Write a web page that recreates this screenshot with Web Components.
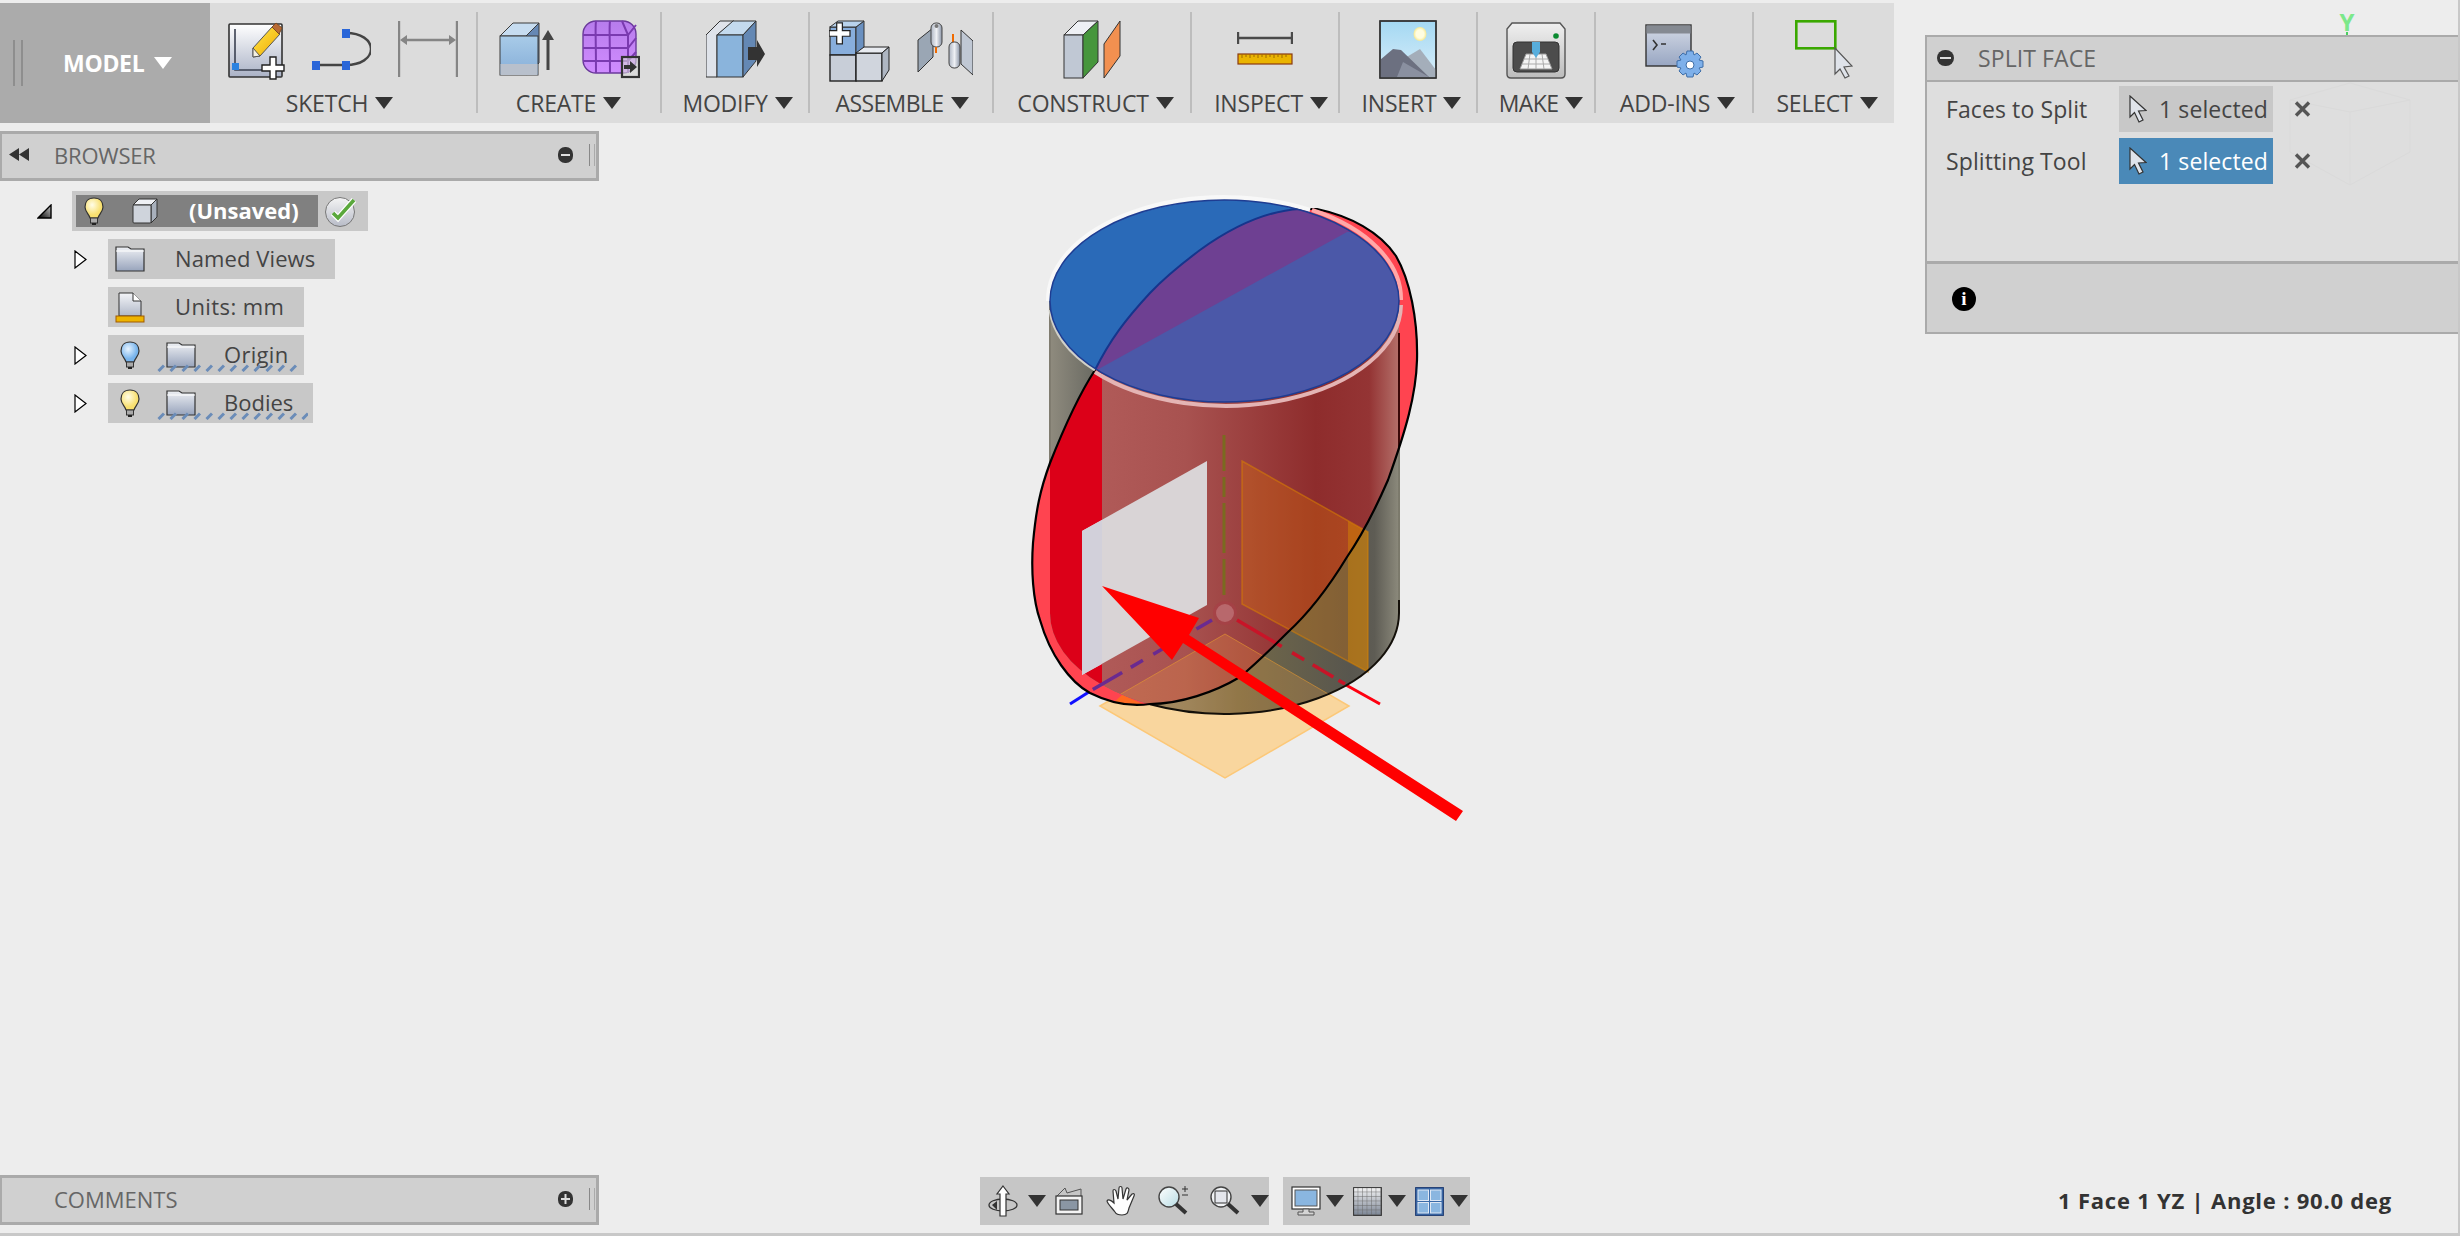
<!DOCTYPE html>
<html>
<head>
<meta charset="utf-8">
<title>Split Face</title>
<style>
    html, body { margin: 0; height: 100%; overflow: hidden; background: #ededed; }
    fx-app > side-panel { margin-top: 8px; }
</style>
</head>
<body>
<fx-app>
    <tool-bar>
        <tool-group label="SKETCH" width="268" shift="-7">
            <fx-icon name="sketch"></fx-icon><fx-icon name="curve"></fx-icon><fx-icon name="dimension"></fx-icon>
        </tool-group>
        <tool-group label="CREATE" width="184" shift="-1">
            <fx-icon name="extrude"></fx-icon><fx-icon name="form"></fx-icon>
        </tool-group>
        <tool-group label="MODIFY" width="148" shift="5">
            <fx-icon name="modify"></fx-icon>
        </tool-group>
        <tool-group label="ASSEMBLE" width="184" shift="2" style="--ls:-.6px">
            <fx-icon name="assemble"></fx-icon><fx-icon name="joint"></fx-icon>
        </tool-group>
        <tool-group label="CONSTRUCT" width="198" shift="7">
            <fx-icon name="construct"></fx-icon>
        </tool-group>
        <tool-group label="INSPECT" width="148" shift="12">
            <fx-icon name="inspect"></fx-icon>
        </tool-group>
        <tool-group label="INSERT" width="138" shift="7">
            <fx-icon name="insert"></fx-icon>
        </tool-group>
        <tool-group label="MAKE" width="118" shift="10" style="--ls:-.6px">
            <fx-icon name="make"></fx-icon>
        </tool-group>
        <tool-group label="ADD-INS" width="158" shift="7">
            <fx-icon name="addins"></fx-icon>
        </tool-group>
        <tool-group label="SELECT" width="140" shift="6">
            <fx-icon name="select"></fx-icon>
        </tool-group>
    </tool-bar>

    <side-panel title="BROWSER" back toggle="minus" style="--ls:-.2px"></side-panel>

    <model-tree>
        <tree-row twisty="open" kind="root">
            <fx-icon name="bulb" style="margin-left:8px"></fx-icon>
            <fx-icon name="box" style="margin-left:28px"></fx-icon>
            <span style="margin-left:31px">(Unsaved)</span>
            <fx-icon name="check" slot="after"></fx-icon>
        </tree-row>
        <tree-row twisty="closed" pad="7" end="20">
            <fx-icon name="folder"></fx-icon>
            <span style="margin-left:30px;letter-spacing:.1px">Named Views</span>
        </tree-row>
        <tree-row pad="7" end="20">
            <fx-icon name="units"></fx-icon>
            <span style="margin-left:30px;letter-spacing:.4px">Units: mm</span>
        </tree-row>
        <tree-row twisty="closed" pad="12" end="16" wavy="140">
            <fx-icon name="bulbblue"></fx-icon>
            <fx-icon name="folder" style="margin-left:26px"></fx-icon>
            <span style="margin-left:28px;letter-spacing:.3px">Origin</span>
        </tree-row>
        <tree-row twisty="closed" pad="12" end="20" wavy="151">
            <fx-icon name="bulb"></fx-icon>
            <fx-icon name="folder" style="margin-left:26px"></fx-icon>
            <span style="margin-left:28px">Bodies</span>
        </tree-row>
    </model-tree>

    <split-dialog title="SPLIT FACE">
        <select-row label="Faces to Split"></select-row>
        <select-row label="Splitting Tool" active></select-row>
    </split-dialog>

    <bottom-bar>
        <side-panel title="COMMENTS" toggle="plus"></side-panel>
        <nav-group style="margin-left:381px;width:289px">
            <fx-icon name="orbit" style="margin-left:8px"></fx-icon>
            <drop-arrow style="margin-left:10px"></drop-arrow>
            <fx-icon name="lookat" style="margin-left:9px"></fx-icon>
            <fx-icon name="hand" style="margin-left:23px"></fx-icon>
            <fx-icon name="zoom" style="margin-left:22px"></fx-icon>
            <fx-icon name="fit" style="margin-left:22px"></fx-icon>
            <drop-arrow style="margin-left:11px"></drop-arrow>
        </nav-group>
        <nav-group style="margin-left:14px;width:187px">
            <fx-icon name="monitor" style="margin-left:8px"></fx-icon>
            <drop-arrow style="margin-left:5px"></drop-arrow>
            <fx-icon name="grid" style="margin-left:9px"></fx-icon>
            <drop-arrow style="margin-left:6px"></drop-arrow>
            <fx-icon name="views" style="margin-left:9px"></fx-icon>
            <drop-arrow style="margin-left:6px"></drop-arrow>
        </nav-group>
        <status-text>1 Face 1 YZ | Angle : 90.0 deg</status-text>
    </bottom-bar>
</fx-app>

<script>
(function() {
    const ICONS = {
        // toolbar icons, all 60 tall, y = 0 is page y 20
        sketch: `<svg width="56" height="60" style="overflow:visible"><defs><linearGradient id="p" x1="0" y1="0" x2="0" y2="1"><stop offset="0" stop-color="#fff"/><stop offset="1" stop-color="#aab2c6"/></linearGradient><linearGradient id="y" x1="0" y1="0" x2="1" y2="1"><stop offset="0" stop-color="#ffe84a"/><stop offset="1" stop-color="#f0a800"/></linearGradient></defs>
            <rect x="1" y="4" width="53" height="53" rx="1" fill="url(#p)" stroke="#333" stroke-width="1.6"/>
            <path d="M7 9V50H36" fill="none" stroke="#3a4050" stroke-width="1.6"/>
            <rect x="4" y="43" width="7" height="7" fill="#2a82e0"/>
            <polygon points="25,28 44,7 52,14 32,36 25,37" fill="url(#y)" stroke="#555"/>
            <polygon points="25,28 32,36 25,37" fill="#f4f0e0" stroke="#555"/>
            <polygon points="44,7 48,3 54,8 51,14" fill="#b86a34" stroke="#7a4a24"/>
            <path d="M42 37h6v8h8v6h-8v8h-6v-8h-8v-6h8z" fill="#fff" stroke="#222" stroke-width="1.4"/></svg>`,
        curve: `<svg width="60" height="60"><path d="M5 45H35C50 45 60 38 60 29C60 20 50 13 35 13" fill="none" stroke="#444" stroke-width="2.4"/>
            <g fill="#2a66d8"><rect x="31" y="9" width="8" height="9"/><rect x="31" y="41" width="8" height="9"/><rect x="1" y="41" width="8" height="9"/></g></svg>`,
        dimension: `<svg width="60" height="60"><g stroke="#858585" stroke-width="2.4" fill="#858585"><path d="M1 1V57M59 1V57M6 20H54" fill="none"/></g><path d="M2 20L9 15V25ZM58 20L51 15V25Z" fill="#858585"/></svg>`,
        extrude: `<svg width="56" height="60"><defs><linearGradient id="f" x1="0" y1="0" x2="0" y2="1"><stop offset="0" stop-color="#a8cbe8"/><stop offset="1" stop-color="#86aed8"/></linearGradient></defs>
            <polygon points="1,16 14,3 40,3 27,16" fill="#c6dcf0" stroke="#3a3a3a"/>
            <polygon points="27,16 40,3 40,43 27,55" fill="#6688b4" stroke="#3a3a3a"/>
            <rect x="1" y="16" width="38" height="39" fill="url(#f)" stroke="#3a3a3a"/>
            <rect x="1.5" y="44" width="37" height="11" fill="#b8c0cc"/>
            <path d="M49 50V14" stroke="#444" stroke-width="3"/><path d="M49 10L55 20H43Z" fill="#444"/></svg>`,
        form: `<svg width="58" height="60"><defs><linearGradient id="g" x1="0" y1="0" x2="0" y2="1"><stop offset="0" stop-color="#b77cec"/><stop offset="1" stop-color="#d08cff"/></linearGradient></defs>
            <rect x="1" y="1" width="53" height="52" rx="13" fill="url(#g)" stroke="#6a3a9a" stroke-width="1.4"/>
            <path d="M1 15H46L54 5M1 28H46L54 18M1 41H46L54 32M14 1C13 8 14 15 14 53M28 1C27 8 28 15 28 53M40 1L46 15V53" fill="none" stroke="#7a3ab0" stroke-width="2"/>
            <rect x="40" y="37" width="17" height="20" fill="#d8d8d8" fill-opacity=".6" stroke="#333" stroke-width="2.2"/><path d="M42 45h6v-4l7 6-7 6v-4h-6z" fill="#333"/></svg>`,
        modify: `<svg width="59" height="60"><polygon points="0,15 14,1 28,1 11,15 11,57 0,57" fill="#dfe3ea" stroke="#333"/><polygon points="11,15 27,1 50,1 37,15" fill="#c4daee" stroke="#333"/><rect x="11" y="15" width="26" height="42" fill="#8ab4dc" stroke="#333"/><polygon points="37,15 50,1 50,41 37,57" fill="#6488b4" stroke="#333"/><path d="M42 28h9v-7l8 14-8 13v-7h-9z" fill="#333" transform="translate(0,-1)"/></svg>`,
        assemble: `<svg width="61" height="62"><rect x="1" y="7" width="26" height="28" fill="#88aedc" stroke="#333" stroke-width="1.3"/><polygon points="27,7 35,1 35,28 27,35" fill="#6a90c0" stroke="#333"/><polygon points="1,7 9,1 35,1 27,7" fill="#b8d2ec" stroke="#333"/>
            <rect x="1" y="35" width="26" height="26" fill="#c8ced8" stroke="#222" stroke-width="1.4"/><rect x="27" y="33" width="26" height="28" fill="#d0d5dd" stroke="#222" stroke-width="1.4"/><polygon points="27,33 35,27 60,27 53,33" fill="#e8ebf0" stroke="#222"/><polygon points="53,33 60,27 60,50 53,61" fill="#aeb6c2" stroke="#222"/>
            <path d="M6 1h6v8h8v6h-8v8h-6v-8h-8v-6h8z" fill="#fff" stroke="#222" stroke-width="1.3" transform="translate(2,2) scale(.95)"/></svg>`,
        joint: `<svg width="56" height="60"><defs><linearGradient id="c" x1="0" y1="0" x2="1" y2="0"><stop offset="0" stop-color="#aeb6c4"/><stop offset=".5" stop-color="#eef0f4"/><stop offset="1" stop-color="#8a94a6"/></linearGradient></defs>
            <polygon points="1,20 16,8 16,37 1,52" fill="#9aa6b4" stroke="#333"/><rect x="14" y="3" width="11" height="24" rx="5" fill="url(#c)" stroke="#444"/><circle cx="19.500" cy="6" r="2" fill="#777"/>
            <path d="M19 27V33" stroke="#f06a00" stroke-width="2"/><path d="M36 14V24" stroke="#f06a00" stroke-width="2"/>
            <polygon points="44,10 56,21 56,55 44,44" fill="#c0c8d4" stroke="#333"/><rect x="32" y="22" width="11" height="26" rx="5" fill="url(#c)" stroke="#444"/></svg>`,
        construct: `<svg width="58" height="60"><polygon points="1,15 15,1 35,1 20,15" fill="#eef0f4" stroke="#333"/><rect x="1" y="15" width="19" height="43" fill="#c0c8d4" stroke="#333"/><polygon points="20,15 35,1 35,42 20,58" fill="#46963c" stroke="#333"/><polygon points="41,24 57,1 57,36 41,58" fill="#f29050" stroke="#333"/></svg>`,
        inspect: `<svg width="56" height="60"><path d="M1 12V24M55 12V24M1 18H55" fill="none" stroke="#4a4a4a" stroke-width="2.400"/><rect x="1" y="34" width="54" height="10" fill="#eab400" stroke="#8a3a10" stroke-width="1.200"/><path d="M5 34v4M9 34v3M13 34v4M17 34v3M21 34v4M25 34v3M29 34v4M33 34v3M37 34v4M41 34v3M45 34v4M49 34v3" stroke="#a06a00"/></svg>`,
        insert: `<svg width="58" height="60"><defs><linearGradient id="s" x1="0" y1="0" x2="0" y2="1"><stop offset="0" stop-color="#a4d8f2"/><stop offset="1" stop-color="#d8eefa"/></linearGradient><radialGradient id="u"><stop offset=".6" stop-color="#fffde0"/><stop offset="1" stop-color="#f6e890"/></radialGradient></defs>
            <rect x="1" y="1" width="56" height="57" fill="url(#s)" stroke="#333" stroke-width="1.400"/><ellipse cx="41" cy="14" rx="6.500" ry="7" fill="url(#u)"/>
            <polygon points="26,38 41,29 57,50 57,57 40,57" fill="#a4aeba"/><polygon points="1,40 14,29 22,30 50,57 1,57" fill="#6c7080"/><polygon points="18,57 24,42 50,57" fill="#8a90a0"/><rect x="1" y="1" width="56" height="57" fill="none" stroke="#333" stroke-width="1.400"/></svg>`,
        make: `<svg width="60" height="60"><defs><linearGradient id="m" x1="0" y1="0" x2="0" y2="1"><stop offset="0" stop-color="#f0f0f0"/><stop offset="1" stop-color="#bcbcbc"/></linearGradient></defs>
            <path d="M6 3H54L59 9V54Q59 58 55 58H5Q1 58 1 54V9Z" fill="url(#m)" stroke="#555" stroke-width="1.400"/><rect x="7" y="22" width="46" height="30" rx="4" fill="#4c4c4c" stroke="#333"/>
            <polygon points="14,49 46,49 40,34 20,34" fill="#f4f4f4" stroke="#999"/><path d="M18 39H42M16 44H44M24 34L22 49M30 34V49M36 34L38 49" stroke="#aaa"/>
            <polygon points="26,22 34,22 34,32 30,38 26,32" fill="#58aedc"/><circle cx="50" cy="16" r="2.800" fill="#0a8a30"/></svg>`,
        addins: `<svg width="58" height="60" style="overflow:visible"><defs><linearGradient id="a" x1="0" y1="0" x2="0" y2="1"><stop offset="0" stop-color="#d4dae6"/><stop offset="1" stop-color="#98a6c2"/></linearGradient></defs>
            <rect x="1" y="5" width="45" height="41" fill="url(#a)" stroke="#333" stroke-width="1.400"/><rect x="1.500" y="5.500" width="44" height="8" fill="#858a92"/>
            <path d="M8 20L12 25L8 30M16 24H21" fill="none" stroke="#333" stroke-width="1.600"/>
            <g transform="translate(45,45)" fill="#7eb0ea" stroke="#3e6ea8"><path d="M-3-14h6l1 4 3-2 4 4-2 3 4 1v6l-4 1 2 3-4 4-3-2-1 4h-6l-1-4-3 2-4-4 2-3-4-1v-6l4-1-2-3 4-4 3 2z"/><circle r="4" fill="#fff"/></g></svg>`,
        select: `<svg width="58" height="60"><rect x="1.300" y="1.300" width="39" height="27" fill="none" stroke="#3aa800" stroke-width="2.600"/><path d="M40 28V54L45 49L50 58L54 56L49 47L57 46Z" fill="#dfe3ea" stroke="#555" stroke-width="1.200"/></svg>`,
        // tree icons
        bulb: `<svg width="20" height="29"><defs><radialGradient id="b" cx=".4" cy=".35"><stop offset="0" stop-color="#fffde8"/><stop offset="1" stop-color="#f8e070"/></radialGradient></defs><path d="M10 1C4 1 1 5 1 10C1 15 5 17 6 21H14C15 17 19 15 19 10C19 5 16 1 10 1Z" fill="url(#b)" stroke="#333" stroke-width="1.200"/><rect x="6.500" y="21" width="7" height="5" fill="#aaa" stroke="#333"/><rect x="8" y="26" width="4" height="2" fill="#222"/></svg>`,
        bulbblue: `<svg width="20" height="29"><defs><radialGradient id="b" cx=".4" cy=".35"><stop offset="0" stop-color="#e8f4ff"/><stop offset="1" stop-color="#78b4ec"/></radialGradient></defs><path d="M10 1C4 1 1 5 1 10C1 15 5 17 6 21H14C15 17 19 15 19 10C19 5 16 1 10 1Z" fill="url(#b)" stroke="#333" stroke-width="1.200"/><rect x="6.500" y="21" width="7" height="5" fill="#aaa" stroke="#333"/><rect x="8" y="26" width="4" height="2" fill="#222"/></svg>`,
        box: `<svg width="26" height="26"><polygon points="1,7 7,1 25,1 19,7" fill="#eef0f4" stroke="#333"/><polygon points="19,7 25,1 25,19 19,25" fill="#a8b0bc" stroke="#333"/><rect x="1" y="7" width="18" height="18" rx="1" fill="#cfd4dc" stroke="#333"/></svg>`,
        check: `<svg width="32" height="31"><defs><linearGradient id="k" x1="0" y1="0" x2="0" y2="1"><stop offset="0" stop-color="#f4f4f4"/><stop offset="1" stop-color="#b8bcc8"/></linearGradient></defs><circle cx="16" cy="16" r="14.500" fill="url(#k)" stroke="#777"/><path d="M9 17L14 22L30 4" fill="none" stroke="#fff" stroke-width="6"/><path d="M9 17L14 22L30 4" fill="none" stroke="#5aa83c" stroke-width="3.600"/></svg>`,
        folder: `<svg width="30" height="26"><defs><linearGradient id="d" x1="0" y1="0" x2="0" y2="1"><stop offset="0" stop-color="#eef0f4"/><stop offset="1" stop-color="#98a4bc"/></linearGradient></defs><path d="M1 25V1H13L16 3H29V25Z" fill="url(#d)" stroke="#333" stroke-width="1.200"/><path d="M1 5H29" stroke="#fff"/></svg>`,
        units: `<svg width="30" height="31"><defs><linearGradient id="d" x1="0" y1="0" x2="0" y2="1"><stop offset="0" stop-color="#f4f5f8"/><stop offset="1" stop-color="#b0b8c8"/></linearGradient></defs><path d="M4 24V1H18L26 9V24Z" fill="url(#d)" stroke="#333"/><path d="M18 1V9H26" fill="#fff" stroke="#333"/><rect x="1" y="24" width="28" height="6" fill="#eeb400" stroke="#a05a00"/></svg>`,
        // view controls
        orbit: `<svg width="30" height="32"><ellipse cx="15" cy="20" rx="14" ry="6" fill="none" stroke="#333" stroke-width="1.300"/><path d="M4 20L9 16V25Z" fill="#333"/><path d="M15 1L21 9H18V31H12V9H9Z" fill="#fff" stroke="#333" stroke-width="1.200"/></svg>`,
        lookat: `<svg width="28" height="30"><path d="M2 10L10 2L12 7L26 3L26 10" fill="none" stroke="#555"/><rect x="1" y="10" width="26" height="18" fill="#f4f4f4" stroke="#333" stroke-width="1.200"/><rect x="5" y="14" width="18" height="10" fill="#8a96a4" stroke="#333"/></svg>`,
        hand: `<svg width="30" height="32"><path d="M9 27C6 23 1 18 1 16C2 14 5 15 8 18L7 6C7 4 9 4 10 6L12 14L13 3C13 1 16 1 16 3L17 14L20 4C21 2 23 3 23 5L21 15L26 9C28 8 29 9 28 11L23 23C22 27 22 30 16 30C12 30 10 29 9 27Z" fill="#fff" stroke="#333" stroke-width="1.200"/></svg>`,
        zoom: `<svg width="30" height="32"><defs><linearGradient id="l" x1="0" y1="0" x2="1" y2="1"><stop offset="0" stop-color="#fff"/><stop offset="1" stop-color="#b8dce4"/></linearGradient></defs><circle cx="11" cy="12" r="10" fill="url(#l)" stroke="#444" stroke-width="1.400"/><path d="M18 19L28 28" stroke="#333" stroke-width="4"/><path d="M24 4H30M27 1V7M24 10H30" stroke="#333" stroke-width="1"/></svg>`,
        fit: `<svg width="30" height="32"><circle cx="11" cy="12" r="10" fill="#f0f2f4" stroke="#444" stroke-width="1.400"/><rect x="5" y="6" width="12" height="12" fill="#e4e6ec" stroke="#333"/><path d="M18 19L28 28" stroke="#333" stroke-width="4"/></svg>`,
        monitor: `<svg width="30" height="30"><rect x="1" y="1" width="28" height="22" fill="#fff" stroke="#333" stroke-width="1.200"/><rect x="4" y="4" width="22" height="16" fill="#8ab6e0" stroke="#555"/><path d="M12 23H18V26H23V29H7V26H12Z" fill="#d4d4d4" stroke="#555"/></svg>`,
        grid: `<svg width="29" height="29"><defs><linearGradient id="r" x1="0" y1="0" x2="0" y2="1"><stop offset="0" stop-color="#f4f4f4"/><stop offset="1" stop-color="#7a8494"/></linearGradient><pattern id="t" width="4.500" height="4.500" patternUnits="userSpaceOnUse"><path d="M0 0H4.500M0 0V4.500" stroke="#666" stroke-width=".9" fill="none"/></pattern></defs><rect x=".6" y=".6" width="27.800" height="27.800" fill="url(#r)"/><rect x=".6" y=".6" width="27.800" height="27.800" fill="url(#t)" stroke="#333"/></svg>`,
        views: `<svg width="29" height="29"><rect x=".6" y=".6" width="27.800" height="27.800" fill="#3a6aa8" stroke="#1e3a70"/><g fill="#8ab6e0" stroke="#dfe8f4"><rect x="3" y="3" width="10.500" height="10.500"/><rect x="15.500" y="3" width="10.500" height="10.500"/><rect x="3" y="15.500" width="10.500" height="10.500"/><rect x="15.500" y="15.500" width="10.500" height="10.500"/></g></svg>`
    };

    class FxIcon extends HTMLElement {
        constructor() {
            super();
            const root = this.attachShadow({ mode: 'open' });
            root.innerHTML = `<style>:host { display: inline-flex; flex: none; } svg { display: block; }</style>` + (ICONS[this.getAttribute("name")] || "");
        }
    }
    customElements.define("fx-icon", FxIcon);

    class DropArrow extends HTMLElement {
        constructor() {
            super();
            this.attachShadow({ mode: 'open' }).innerHTML = `<style>
                :host { display: inline-block; flex: none; width: 0; height: 0; border-left: 9px solid transparent; border-right: 9px solid transparent; border-top: 12px solid #333; }
            </style>`;
        }
    }
    customElements.define("drop-arrow", DropArrow);

    class ToolBar extends HTMLElement {
        constructor() {
            super();
            this.attachShadow({ mode: 'open' }).innerHTML = `<style>
                :host { display: flex; width: 1894px; height: 120px; margin-top: 3px; background: #dcdcdc; flex: none; font-family: "Open Sans", sans-serif; }
                .model { width: 210px; flex: none; background: #ababab; display: flex; align-items: center; box-sizing: border-box; padding-left: 13px; color: #fff; font-weight: 700; font-size: 23px; letter-spacing: -.3px; }
                .grip { width: 6px; height: 46px; border-left: 2px solid #8e8e8e; border-right: 2px solid #8e8e8e; margin-right: 40px; margin-top: -1px; }
                .arrow { width: 0; height: 0; border-left: 9px solid transparent; border-right: 9px solid transparent; border-top: 12px solid #fff; margin-left: 10px; }
            </style>
            <div class="model"><div class="grip"></div>MODEL<div class="arrow"></div></div>
            <slot></slot>`;
        }
    }
    customElements.define("tool-bar", ToolBar);

    class ToolGroup extends HTMLElement {
        constructor() {
            super();
            const shift = +(this.getAttribute("shift") || 0);
            const root = this.attachShadow({ mode: 'open' });
            root.innerHTML = `<style>
                :host { display: flex; flex-direction: column; flex: none; box-sizing: border-box; height: 101px; margin-top: 9px; padding-top: 8px; border-right: 2px solid #bdbdbd; color: #444; }
                :host(:last-child) { border-right: 0; }
                .icons { display: flex; justify-content: center; gap: 27px; height: 60px; }
                .label { display: flex; align-items: center; justify-content: center; gap: 7px; height: 24px; margin-top: 11px; font-size: 23px; letter-spacing: var(--ls, -.2px); white-space: nowrap; }
            </style>
            <div class="icons"><slot></slot></div>
            <div class="label"><span></span><drop-arrow></drop-arrow></div>`;
            root.querySelector("span").textContent = this.getAttribute("label");
            root.querySelector(".label").style.paddingLeft = Math.max(shift, 0) + "px";
            root.querySelector(".label").style.paddingRight = Math.max(-shift, 0) + "px";
            this.style.width = this.getAttribute("width") + "px";
        }
    }
    customElements.define("tool-group", ToolGroup);

    class SidePanel extends HTMLElement {
        constructor() {
            super();
            const plus = this.getAttribute("toggle") === "plus";
            const back = this.hasAttribute("back");
            const title = this.getAttribute("title");
            this.attachShadow({ mode: 'open' }).innerHTML = `<style>
                :host { display: flex; align-items: center; flex: none; box-sizing: border-box; width: 599px; height: 50px; padding-bottom: 3px; background: #d0d0d0; border: 3px solid #aaa; border-left-width: 2px; font-family: "Open Sans", sans-serif; font-size: 22px; color: #666; letter-spacing: var(--ls, 0); }
                .back { position: absolute; margin-left: 7px; }
                .title { margin-left: 52px; flex: 1; }
                svg { display: block; flex: none; }
                .grip { width: 4px; height: 22px; border-left: 1.500px solid #888; border-right: 1.500px solid #aaa; margin: 0 1px 0 16px; }
            </style>
            ${back ? `<svg class="back" width="20" height="13"><path d="M10 0V13L0 6.500ZM20 0V13L10 6.500Z" fill="#333"/></svg>` : ""}
            <div class="title">${title}</div>
            <svg width="15" height="16"><rect width="15" height="16" rx="7" fill="#333"/><path d="M3 8H12${plus ? "M7.500 3V13" : ""}" stroke="#ddd" stroke-width="2"/></svg>
            <div class="grip"></div>`;
            this.removeAttribute("title");
        }
    }
    customElements.define("side-panel", SidePanel);

    class ModelTree extends HTMLElement {
        constructor() {
            super();
            this.attachShadow({ mode: 'open' }).innerHTML = `<style>
                :host { display: flex; flex-direction: column; gap: 8px; margin-top: 10px; font-family: "Open Sans", sans-serif; font-size: 22px; line-height: 28px; color: #444; }
                ::slotted(*) { flex: none; }
            </style><slot></slot>`;
        }
    }
    customElements.define("model-tree", ModelTree);

    class TreeRow extends HTMLElement {
        constructor() {
            super();
            const twisty = this.getAttribute("twisty");
            const root = this.getAttribute("kind") === "root";
            const wavy = this.getAttribute("wavy");
            let tw = "";
            if (twisty === "open") {
                tw = `<svg class="tw" width="15" height="15"><defs><linearGradient id="o" x1="0" y1="1" x2="1" y2="0"><stop offset="0" stop-color="#000"/><stop offset="1" stop-color="#ccc"/></linearGradient></defs><path d="M1 14L14 1V14Z" fill="url(#o)" stroke="#000" stroke-width="1.400"/></svg>`;
            } else if (twisty === "closed") {
                tw = `<svg class="tw" width="13" height="19"><path d="M1 1L12 9.500L1 18Z" fill="#fff" stroke="#000" stroke-width="1.200"/></svg>`;
            }
            this.attachShadow({ mode: 'open' }).innerHTML = `<style>
                :host { display: flex; align-items: center; height: 40px; margin-left: ${root ? 37 : 74}px; font-weight: ${root ? 700 : 400}; }
                .tw { display: block; flex: none; position: absolute; }
                .box { display: flex; align-items: center; height: 40px; background: #c8c8c8; position: relative; margin-left: 34px; padding-left: ${this.getAttribute("pad") || 0}px; padding-right: ${this.getAttribute("end") || 0}px; }
                ::slotted(span) { position: relative; top: -1px; }
                .root { height: 32px; background: #808080; color: #fff; margin: 0 0 0 4px; display: flex; align-items: center; width: 242px; box-sizing: border-box; }
                .outer { display: flex; align-items: center; height: 40px; width: 296px; margin-left: 35px; background: #c8c8c8; }
                .after { margin-left: 6px; display: flex; }
                .wavy { position: absolute; left: 49px; bottom: 3px; height: 9px; }
            </style>
            ${tw}
            ${root ? `<div class="outer"><div class="root"><slot></slot></div><div class="after"><slot name="after"></slot></div></div>`
                   : `<div class="box"><slot></slot>${wavy ? `<svg class="wavy" width="${wavy}" height="9"><defs><pattern id="w" width="12" height="9" patternUnits="userSpaceOnUse"><path d="M1.500 8L7 2.500" stroke="#6a8cb8" stroke-width="3"/></pattern></defs><rect width="${wavy}" height="9" fill="url(#w)"/></svg>` : ""}</div>`}`;
        }
    }
    customElements.define("tree-row", TreeRow);

    class SplitDialog extends HTMLElement {
        constructor() {
            super();
            const title = this.getAttribute("title");
            this.attachShadow({ mode: 'open' }).innerHTML = `<style>
                :host { position: absolute; top: 35px; left: 1925px; right: 0; box-sizing: border-box; border: 2px solid #aaa; border-right: 0; display: flex; flex-direction: column; height: 299px; font-family: "Open Sans", sans-serif; font-size: 23px; letter-spacing: .1px; color: #444; }
                header { display: flex; align-items: center; height: 45px; padding-bottom: 2px; box-sizing: border-box; flex: none; background: #d0d0d0; border-bottom: 2px solid #aaa; padding-left: 10px; color: #666; }
                header svg { margin-right: 24px; flex: none; }
                .body { flex: 1; background: #dedede; padding: 4px 0 0 19px; display: flex; flex-direction: column; gap: 6px; position: relative; }
                .cube { position: absolute; left: 362px; top: 0; }
                footer { height: 71px; flex: none; box-sizing: border-box; background: #d0d0d0; border-top: 3px solid #aaa; display: flex; align-items: center; padding-left: 25px; }
                .info { width: 24px; height: 24px; border-radius: 50%; background: #000; color: #fff; font: 700 19px/24px "Liberation Serif", serif; text-align: center; margin-top: 1px; }
            </style>
            <header>
                <svg width="17" height="16"><rect width="17" height="16" rx="8" fill="#333"/><path d="M3 8H14" stroke="#ddd" stroke-width="2"/></svg>
                <span>${title}</span>
            </header>
            <div class="body">
                <svg class="cube" width="122" height="104"><path d="M1 18L61 1L121 18V70L61 103L1 70ZM61 30V103M1 18L61 30L121 18" fill="none" stroke="#dadada"/></svg>
                <slot></slot>
            </div>
            <footer><div class="info">i</div></footer>`;
            this.removeAttribute("title");
        }
    }
    customElements.define("split-dialog", SplitDialog);

    class SelectRow extends HTMLElement {
        constructor() {
            super();
            const active = this.hasAttribute("active");
            this.attachShadow({ mode: 'open' }).innerHTML = `<style>
                :host { display: flex; align-items: center; height: 46px; position: relative; }
                .label { width: 173px; flex: none; }
                .btn { width: 154px; height: 46px; flex: none; box-sizing: border-box; display: flex; align-items: center; padding-left: 10px; gap: 12px; background: ${active ? "#4a89b8" : "#c8c8c8"}; color: ${active ? "#fff" : "#444"}; }
                svg { display: block; flex: none; }
                .x { margin-left: 21px; }
            </style>
            <div class="label">${this.getAttribute("label")}</div>
            <div class="btn">
                <svg width="18" height="28"><path d="M1 1V22L5.500 17.500L10 27L14 25L9.500 16L17 15.500Z" fill="#dfe3ea" stroke="#333" stroke-width="1.200"/></svg>
                <span>1 selected</span>
            </div>
            <svg class="x" width="17" height="16"><path d="M2 1.500L15 14.500M15 1.500L2 14.500" stroke="#555" stroke-width="3.400"/></svg>`;
            this.removeAttribute("label");
        }
    }
    customElements.define("select-row", SelectRow);

    class BottomBar extends HTMLElement {
        constructor() {
            super();
            this.attachShadow({ mode: 'open' }).innerHTML = `<style>
                :host { display: flex; align-items: flex-start; margin-top: auto; margin-bottom: 8px; height: 50px; flex: none; }
            </style><slot></slot>`;
        }
    }
    customElements.define("bottom-bar", BottomBar);

    class NavGroup extends HTMLElement {
        constructor() {
            super();
            this.attachShadow({ mode: 'open' }).innerHTML = `<style>
                :host { display: flex; align-items: center; height: 48px; margin-top: 2px; background: #c6c6c6; flex: none; box-sizing: border-box; }
            </style><slot></slot>`;
        }
    }
    customElements.define("nav-group", NavGroup);

    class StatusText extends HTMLElement {
        constructor() {
            super();
            this.attachShadow({ mode: 'open' }).innerHTML = `<style>
                :host { display: block; margin-left: auto; padding-right: 66px; line-height: 50px; font-family: "Open Sans", sans-serif; font-weight: 700; font-size: 22px; letter-spacing: .78px; color: #333; white-space: nowrap; }
            </style><slot></slot>`;
        }
    }
    customElements.define("status-text", StatusText);

    const RED_SHAPE = "M1317 209C1350 216 1380 232 1396 256C1410 280 1418 320 1417 360C1416 395 1406 430 1388 480C1375 510 1362 535 1347 557C1330 585 1310 612 1287 633C1272 648 1258 662 1240 677C1215 692 1180 704 1150 704C1130 707 1110 703 1090 693C1070 682 1050 655 1040 620C1033 600 1031 570 1033 543C1036 510 1040 490 1050 463C1065 425 1080 393 1095 370C1110 340 1125 320 1150 293C1168 274 1184 262 1200 250C1225 232 1262 211 1300 209Z";
    const CYL_BODY = "M1050 301V613A174.500 101 0 0 0 1399 613V301Z";

    class ModelView extends HTMLElement {
        constructor() {
            super();
            this.attachShadow({ mode: 'open' }).innerHTML = `<style>
                :host { position: absolute; inset: 0; display: block; }
                svg { display: block; }
            </style>
            <svg width="2460" height="1236" viewBox="0 0 2460 1236">
                <defs>
                    <clipPath id="redClip"><path d="${RED_SHAPE}"/></clipPath>
                    <clipPath id="cylClip"><path d="${CYL_BODY}"/></clipPath>
                    <clipPath id="topClip"><ellipse cx="1224.500" cy="301" rx="174.500" ry="101"/></clipPath>
                    <linearGradient id="cylGrey" gradientUnits="userSpaceOnUse" x1="1050" y1="0" x2="1399" y2="0">
                        <stop offset="0" stop-color="#8f8b7e"/><stop offset=".12" stop-color="#6c6c64"/><stop offset=".36" stop-color="#887f66"/><stop offset=".55" stop-color="#726848"/><stop offset=".86" stop-color="#58564e"/><stop offset=".93" stop-color="#5e5c54"/><stop offset="1" stop-color="#8c8a7c"/>
                    </linearGradient>
                    <linearGradient id="cylRed" gradientUnits="userSpaceOnUse" x1="1102" y1="0" x2="1399" y2="0">
                        <stop offset="0" stop-color="#b05a58"/><stop offset=".28" stop-color="#a85250"/><stop offset=".72" stop-color="#8e2c2c"/><stop offset=".9" stop-color="#943434"/><stop offset="1" stop-color="#b4706a"/>
                    </linearGradient>
                </defs>

                <!-- floor plane -->
                <polygon points="1100,706 1225,634 1349,706 1225,778" fill="#f9d69e" stroke="#fcc878" stroke-width="1.500"/>
                <path d="M1070 704L1092 690" stroke="#1010ff" stroke-width="3"/>
                <path d="M1346 685L1380 704" stroke="#ff0010" stroke-width="3"/>

                <!-- split face and cylinder -->
                <path d="${RED_SHAPE}" fill="#ff4450"/>
                <path d="${CYL_BODY}" fill="url(#cylGrey)"/>
                <g clip-path="url(#redClip)">
                    <g clip-path="url(#cylClip)">
                        <rect x="1050" y="200" width="52" height="520" fill="#dc0018"/>
                        <rect x="1102" y="200" width="297" height="520" fill="url(#cylRed)"/>
                    </g>
                </g>
                <polygon points="1082,531 1207,461 1207,605 1082,675" fill="#d9d4d6"/>
                <polygon points="1082,531 1102,520 1102,664 1082,675" fill="#d2d0da"/>
                <polygon points="1242,461 1368,532 1368,672 1242,604" fill="#e67800" fill-opacity=".3" stroke="#d88000" stroke-opacity=".55" stroke-width="1.500"/>
                <polygon points="1348,521 1368,532 1368,672 1348,661" fill="#d88a00" fill-opacity=".45"/>
                <g clip-path="url(#cylClip)">
                    <polygon points="1100,706 1225,634 1349,706 1225,778" fill="#ffaa46" fill-opacity=".22" stroke="#e89a30" stroke-opacity=".6"/>
                </g>
                <polygon points="1113,703 1122,695 1145,705" fill="#ff6a20"/>

                <!-- axes and origin -->
                <path d="M1224 435V600" stroke="#7a6a20" stroke-width="3" stroke-dasharray="36 6 20 6 50 6"/>
                <path d="M1237 620L1345 684" stroke="#c81428" stroke-width="3.500" stroke-dasharray="52 12 14 10 24 6"/>
                <path d="M1212 620L1092 690" stroke="#6a2a90" stroke-width="3.500" stroke-dasharray="18 12 14 10 14 12 14 10 34 6"/>
                <circle cx="1225" cy="613" r="12" fill="#a84048" fill-opacity=".6"/>
                <circle cx="1225" cy="613" r="9" fill="#b8686c"/>

                <!-- outlines -->
                <path d="M1399 600V613A174.500 101 0 0 1 1150 704.300" fill="none" stroke="#14100a" stroke-width="2"/>
                <path d="M1399 333V447" stroke="#3a0808" stroke-width="2"/>
                <path d="M1050 301V463" stroke="#807c70" stroke-width="2"/>
                <path d="M1399 447V600" stroke="#7c7a6c" stroke-width="2"/>
                <path d="${RED_SHAPE}" fill="none" stroke="#000" stroke-width="2.200"/>

                <!-- top cap -->
                <path d="M1048 301A176.500 103 0 0 1 1310 210" fill="none" stroke="#f8f8f8" stroke-width="4"/>
                <path d="M1050 310A174.500 101 0 0 0 1095 370" fill="none" stroke="#d0d0c8" stroke-width="3"/>
                <path d="M1095 372A175.500 102 0 0 0 1401 305" fill="none" stroke="#e4b4b4" stroke-width="4"/>
                <path d="M1312 210A175.500 102 0 0 1 1401 300" fill="none" stroke="#ffa8a8" stroke-width="4"/>
                <ellipse cx="1224.500" cy="301" rx="174.500" ry="101" fill="#2a6ab8"/>
                <g clip-path="url(#topClip)">
                    <path d="${RED_SHAPE}" fill="#6e4092"/>
                    <polygon points="1095,371 1347,232 1420,232 1420,420 1095,420" fill="#4b58a8"/>
                    <path d="${RED_SHAPE}" fill="none" stroke="#16358c" stroke-width="2"/>
                </g>
                <ellipse cx="1224.500" cy="301" rx="174.500" ry="101" fill="none" stroke="#1e3c92" stroke-width="1.500"/>

                <!-- annotation arrow -->
                <polygon points="1102,586 1199,618 1189,635 1463,811 1456,821 1183,643 1172,660" fill="#ff0000"/>

                <!-- view cube hint -->
                <text x="2347" y="31" text-anchor="middle" font-family="Open Sans, sans-serif" font-size="24" font-weight="700" fill="#7ce88a">Y</text>
                <path d="M2347 32V35" stroke="#4ad060" stroke-width="2"/>
            </svg>`;
        }
    }
    customElements.define("model-view", ModelView);

    class FxApp extends HTMLElement {
        constructor() {
            super();
            this.attachShadow({ mode: 'open' }).innerHTML = `<style>
                :host { display: flex; flex-direction: column; position: relative; box-sizing: border-box; height: 1236px; width: 2460px; background: #ededed; border-right: 2px solid #c8c8c8; border-bottom: 3px solid #c8c8c8; }
                model-view { z-index: 0; }
                .layer { position: relative; z-index: 1; display: flex; flex-direction: column; flex: 1; }
            </style>
            <model-view></model-view>
            <div class="layer"><slot></slot></div>`;
        }
    }
    customElements.define("fx-app", FxApp);
})();
</script>
</body>
</html>
